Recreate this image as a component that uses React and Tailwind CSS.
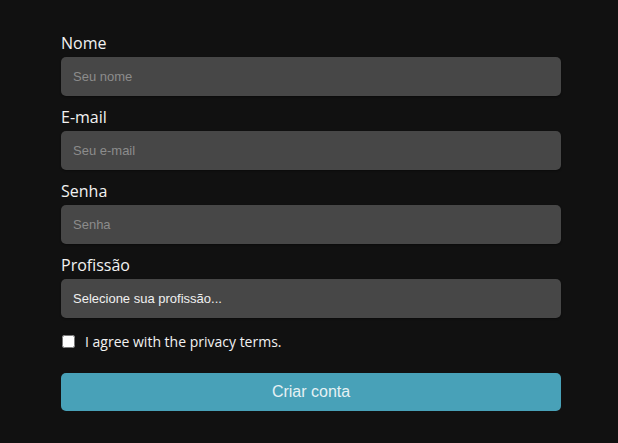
import React from "react";

const Field = ({ label, children }) => (
  <div className="flex flex-col">
    <label className="mb-[3px] text-[16px] leading-[21px] font-medium text-[#f2f2f2]">
      {label}
    </label>
    {children}
  </div>
);

const inputCls =
  "h-[39px] w-full rounded-[5px] border-none bg-[#474747] px-3 font-['Liberation_Sans',Arial,sans-serif] text-[13px] text-white placeholder-[#8c8c8c] outline-none shadow-[0_1px_2px_rgba(0,0,0,0.4)]";

export default function App() {
  return (
    <div className="min-h-[443px] w-full bg-[#111111] font-['Open_Sans',sans-serif]">
      <form className="ml-[61px] flex w-[500px] flex-col gap-[11px] pt-[33px]">
        <Field label="Nome">
          <input type="text" placeholder="Seu nome" className={inputCls} />
        </Field>
        <Field label="E-mail">
          <input type="email" placeholder="Seu e-mail" className={inputCls} />
        </Field>
        <Field label="Senha">
          <input type="password" placeholder="Senha" className={inputCls} />
        </Field>
        <Field label="Profissão">
          <div className="flex h-[39px] w-full items-center rounded-[5px] bg-[#474747] px-3 font-['Liberation_Sans',Arial,sans-serif] text-[13px] text-[#f0f0f0] shadow-[0_1px_2px_rgba(0,0,0,0.4)]">
            Selecione sua profissão...
          </div>
        </Field>
        <label className="mt-[3px] flex items-center gap-[10px] pl-[1px] text-[14px] leading-[19px] font-medium text-[#f2f2f2]">
          <input type="checkbox" className="h-[13px] w-[13px] accent-white" />
          I agree with the privacy terms.
        </label>
        <button
          type="button"
          className="mt-[11px] h-[38px] w-full rounded-[5px] bg-[#48a1b8] font-['Liberation_Sans',Arial,sans-serif] text-[16px] text-[#e6f1f4]"
        >
          Criar conta
        </button>
      </form>
    </div>
  );
}
